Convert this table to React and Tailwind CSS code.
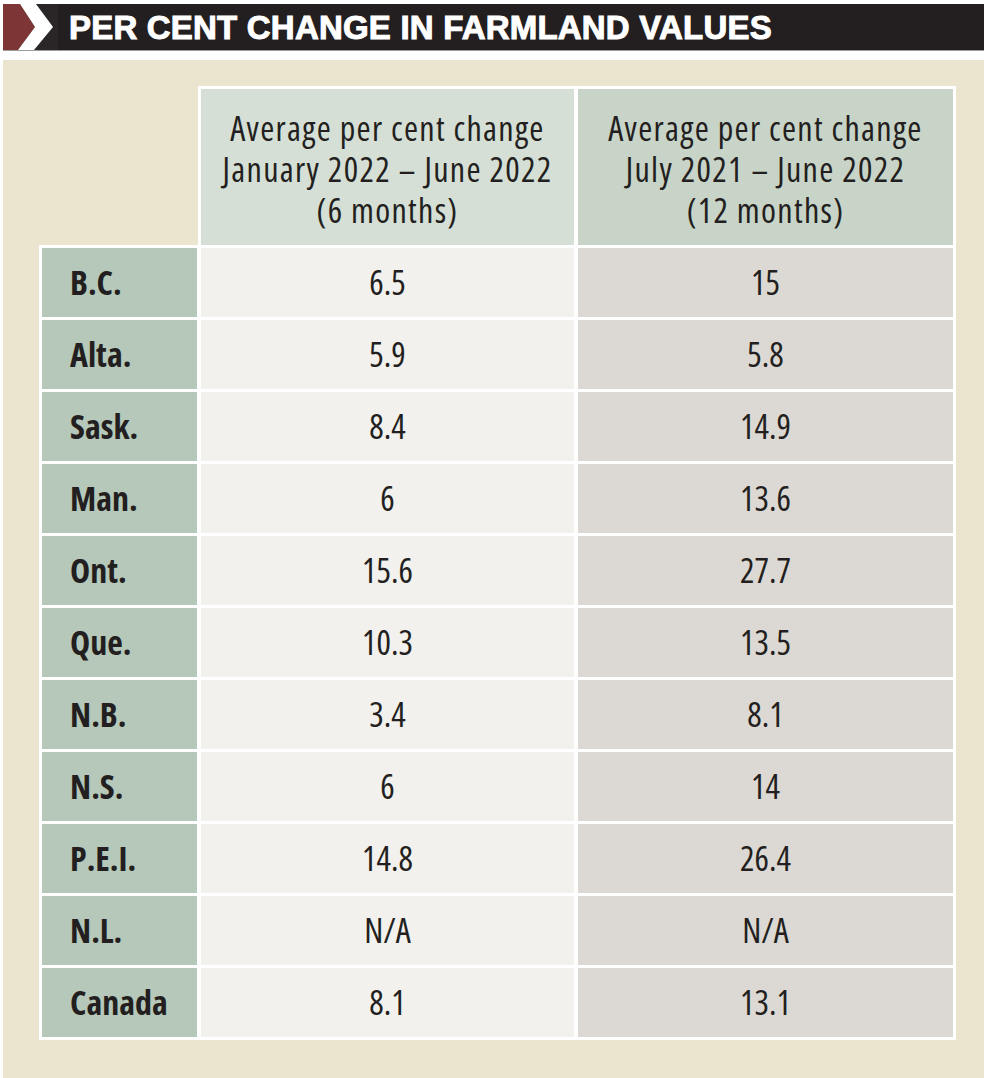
import React from "react";

const rows = [
  ["B.C.", "6.5", "15"],
  ["Alta.", "5.9", "5.8"],
  ["Sask.", "8.4", "14.9"],
  ["Man.", "6", "13.6"],
  ["Ont.", "15.6", "27.7"],
  ["Que.", "10.3", "13.5"],
  ["N.B.", "3.4", "8.1"],
  ["N.S.", "6", "14"],
  ["P.E.I.", "14.8", "26.4"],
  ["N.L.", "N/A", "N/A"],
  ["Canada", "8.1", "13.1"],
];

// Open Sans ships a condensed width, picked through font-stretch
const narrow = "font-['Open_Sans',sans-serif] [font-stretch:75%]";

// little red + white chevron at the start of the title bar
const Chevron = () => (
  <svg width="55" height="46" viewBox="0 0 55 46" className="shrink-0">
    <rect x="0" y="0" width="55" height="46" fill="#2a2627" />
    <polygon points="0,0 17,0 32,23 15,46 0,46" fill="#7d3535" />
    <polygon points="17,0 33,0 50,23 31,46 15,46 32,23" fill="#ffffff" />
  </svg>
);

const App = () => {
  return (
    <div className="w-[984px] h-[1078px] bg-white overflow-hidden">
      {/* Title bar */}
      <div className="mt-[4px] ml-[3px] flex items-center h-[47px] bg-[#231f20] border-b border-[#9c9c9c]">
        <Chevron />
        <h1 className="ml-[11px] text-white text-[33px] leading-none font-bold tracking-[0.2px] font-['Liberation_Sans','Arial',sans-serif] [-webkit-text-stroke:1px_white]">
          PER CENT CHANGE IN FARMLAND VALUES
        </h1>
      </div>

      {/* Cream panel */}
      <div className={`mt-[9px] ml-[3px] h-[1018px] bg-[#ebe5d0] pt-[26px] pl-[36px] ${narrow} text-[#231f20]`}>
        <div className="w-[917px]">
          {/* Column headers */}
          <div className="ml-[159px] flex gap-[4px] bg-white pt-[3px] px-[3px]">
            <div className="w-[373px] h-[156px] bg-[#d5dfd5] flex items-center justify-center text-center text-[34px] leading-[41px] font-medium tracking-[1.3px] pt-[4px]">
              Average per cent change<br />January 2022 – June 2022<br />(6 months)
            </div>
            <div className="w-[375px] h-[156px] bg-[#c8d4c8] flex items-center justify-center text-center text-[34px] leading-[41px] font-medium tracking-[1.3px] pt-[4px]">
              Average per cent change<br />July 2021 – June 2022<br />(12 months)
            </div>
          </div>

          {/* Body rows */}
          <div className="bg-white p-[3px] flex flex-col gap-[3px]">
            {rows.map(([prov, six, twelve]) => (
              <div key={prov} className="flex gap-[4px] h-[69px]">
                <div className="w-[155px] bg-[#b6c8ba] flex items-center pl-[28px] text-[34px] font-bold">
                  {prov}
                </div>
                <div className="w-[373px] bg-[#f2f1ed] flex items-center justify-center text-[34px] font-medium">
                  {six}
                </div>
                <div className="w-[375px] bg-[#dcd9d4] flex items-center justify-center text-[34px] font-medium">
                  {twelve}
                </div>
              </div>
            ))}
          </div>
        </div>
      </div>
    </div>
  );
};

export default App;
